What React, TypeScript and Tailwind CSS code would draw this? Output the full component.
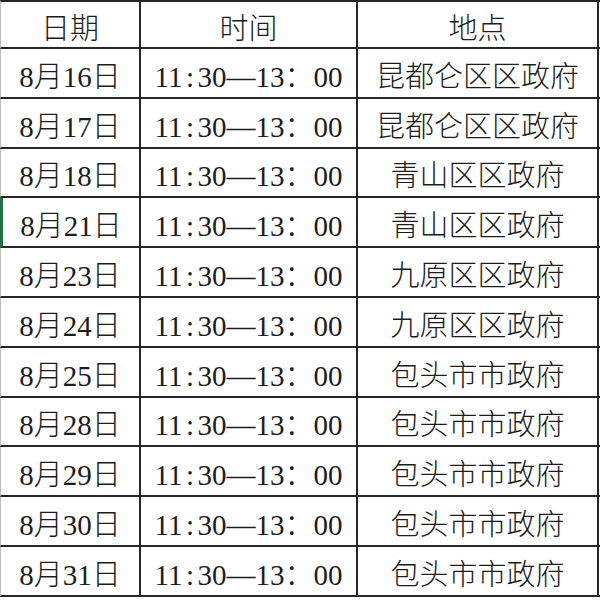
const rows = [
  { date: '8月16日', place: '昆都仑区区政府' },
  { date: '8月17日', place: '昆都仑区区政府' },
  { date: '8月18日', place: '青山区区政府' },
  { date: '8月21日', place: '青山区区政府', selected: true },
  { date: '8月23日', place: '九原区区政府' },
  { date: '8月24日', place: '九原区区政府' },
  { date: '8月25日', place: '包头市市政府' },
  { date: '8月28日', place: '包头市市政府' },
  { date: '8月29日', place: '包头市市政府' },
  { date: '8月30日', place: '包头市市政府' },
  { date: '8月31日', place: '包头市市政府' },
];

const cell = 'flex items-center justify-center border-r-2 border-r-[#262626] pt-[9px]';

const Time = () => (
  <span>
    11<span className="px-[3.5px]">:</span>30—13：00
  </span>
);

export default function App() {
  return (
    <div
      className="w-[600px] h-[600px] bg-white text-[29px] leading-none font-light text-[#1c1c1c]"
      style={{ fontFamily: '"Liberation Serif", "Noto Sans CJK SC", serif' }}
    >
      <div className="flex h-[49px] border-t-2 border-t-[#262626] border-b-2 border-b-[#262626] border-l border-l-[#bdbdbd]">
        <div className={`${cell} w-[140px]`}>日期</div>
        <div className={`${cell} w-[217px]`}>时间</div>
        <div className={`${cell} w-[241px]`}>地点</div>
      </div>
      {rows.map((r) => (
        <div
          key={r.date}
          className={
            r.selected
              ? 'flex h-[49.8px] border-b-2 border-b-[#262626] border-l-[3px] border-l-[#1f7244]'
              : 'flex h-[49.8px] border-b-2 border-b-[#262626] border-l border-l-[#bdbdbd]'
          }
        >
          <div className={`${cell} ${r.selected ? 'w-[138px]' : 'w-[140px]'}`}>{r.date}</div>
          <div className={`${cell} w-[217px]`}>
            <Time />
          </div>
          <div className={`${cell} w-[241px]`}>{r.place}</div>
        </div>
      ))}
    </div>
  );
}
